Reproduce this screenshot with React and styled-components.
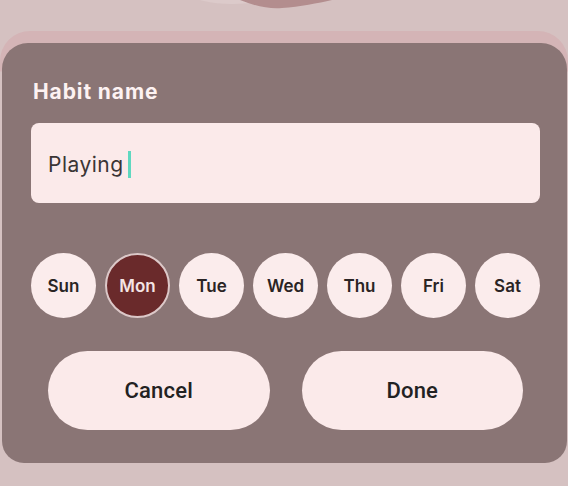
import React, { useState } from "react";
import styled, { createGlobalStyle } from "styled-components";

const GlobalStyle = createGlobalStyle`
  html, body {
    margin: 0;
    padding: 0;
    background: #d5c1c1;
  }
  * {
    box-sizing: border-box;
  }
`;

const days = ["Sun", "Mon", "Tue", "Wed", "Thu", "Fri", "Sat"];

export default function App() {
  const [selected, setSelected] = useState("Mon");
  const [name, setName] = useState("Playing");

  return (
    <Page>
      <GlobalStyle />
      <TopStrip>
        <svg width="568" height="31" viewBox="0 0 568 31">
          <ellipse cx="232" cy="-6" rx="40" ry="10" fill="#dccaca" />
          <path
            d="M240 0 C 255 6, 268 9, 282 8 C 300 7, 318 3, 332 0 Z"
            fill="#b38d8e"
          />
        </svg>
      </TopStrip>
      <Sheet>
        <Card>
          <Label>Habit name</Label>
          <InputBox>
            <NameText>{name}</NameText>
            <Caret />
          </InputBox>
          <DayRow>
            {days.map(d => (
              <DayButton
                key={d}
                $active={d === selected}
                onClick={() => setSelected(d)}
              >
                {d}
              </DayButton>
            ))}
          </DayRow>
          <Actions>
            <PillButton onClick={() => setName("")}>Cancel</PillButton>
            <PillButton>Done</PillButton>
          </Actions>
        </Card>
      </Sheet>
    </Page>
  );
}

const Page = styled.div`
  width: 568px;
  height: 486px;
  overflow: hidden;
  background: #d5c1c1;
  display: flex;
  flex-direction: column;
`;

const TopStrip = styled.div`
  height: 31px;
  flex-shrink: 0;
  svg {
    display: block;
  }
`;

const Sheet = styled.div`
  padding: 12px 1px 0 2px;
  border-radius: 30px 30px 0 0;
  background: linear-gradient(#d4b4b6 0, #d4b4b6 40px, #d5c1c1 41px);
`;

const Card = styled.div`
  height: 420px;
  background: #8a7575;
  border-radius: 26px 26px 22px 22px;
  padding: 37px 27px 0 29px;
  display: flex;
  flex-direction: column;
`;

const Label = styled.div`
  font-family: Inter, "Noto Sans", sans-serif;
  font-weight: 700;
  font-size: 21px;
  line-height: 24px;
  color: #fdf2f2;
  padding-left: 2px;
  letter-spacing: 0.9px;
`;

const InputBox = styled.div`
  margin-top: 19px;
  height: 80px;
  background: #fbeaea;
  border-radius: 8px;
  display: flex;
  align-items: center;
  padding: 0 17px;
  gap: 4px;
`;

const NameText = styled.span`
  font-family: Inter, "Noto Sans", sans-serif;
  font-size: 21px;
  font-weight: 400;
  color: #3a3535;
  letter-spacing: 0.5px;
  margin-top: 2px;
`;

const Caret = styled.span`
  width: 3px;
  height: 27px;
  background: #5fd8c0;
  margin-top: 2px;
`;

const DayRow = styled.div`
  margin-top: 50px;
  display: flex;
  justify-content: space-between;
  align-items: center;
`;

const DayButton = styled.button`
  width: 65px;
  height: 65px;
  border-radius: 50%;
  border: ${p => (p.$active ? "2px solid #dcc8c8" : "none")};
  background: ${p => (p.$active ? "#6a2a2b" : "#fbecec")};
  color: ${p => (p.$active ? "#f4e4e4" : "#2a2424")};
  font-family: Inter, "Noto Sans", sans-serif;
  font-weight: 600;
  font-size: 17px;
  padding: 0;
  cursor: pointer;
  display: flex;
  align-items: center;
  justify-content: center;
`;

const Actions = styled.div`
  margin-top: 33px;
  display: flex;
  gap: 32px;
  padding: 0 17px 0 17px;
`;

const PillButton = styled.button`
  flex: 1;
  height: 79px;
  border: none;
  border-radius: 40px;
  background: #fbeaea;
  font-family: Roboto, "Liberation Sans", sans-serif;
  font-weight: 500;
  font-size: 22px;
  letter-spacing: 0.2px;
  color: #222;
  cursor: pointer;
`;
